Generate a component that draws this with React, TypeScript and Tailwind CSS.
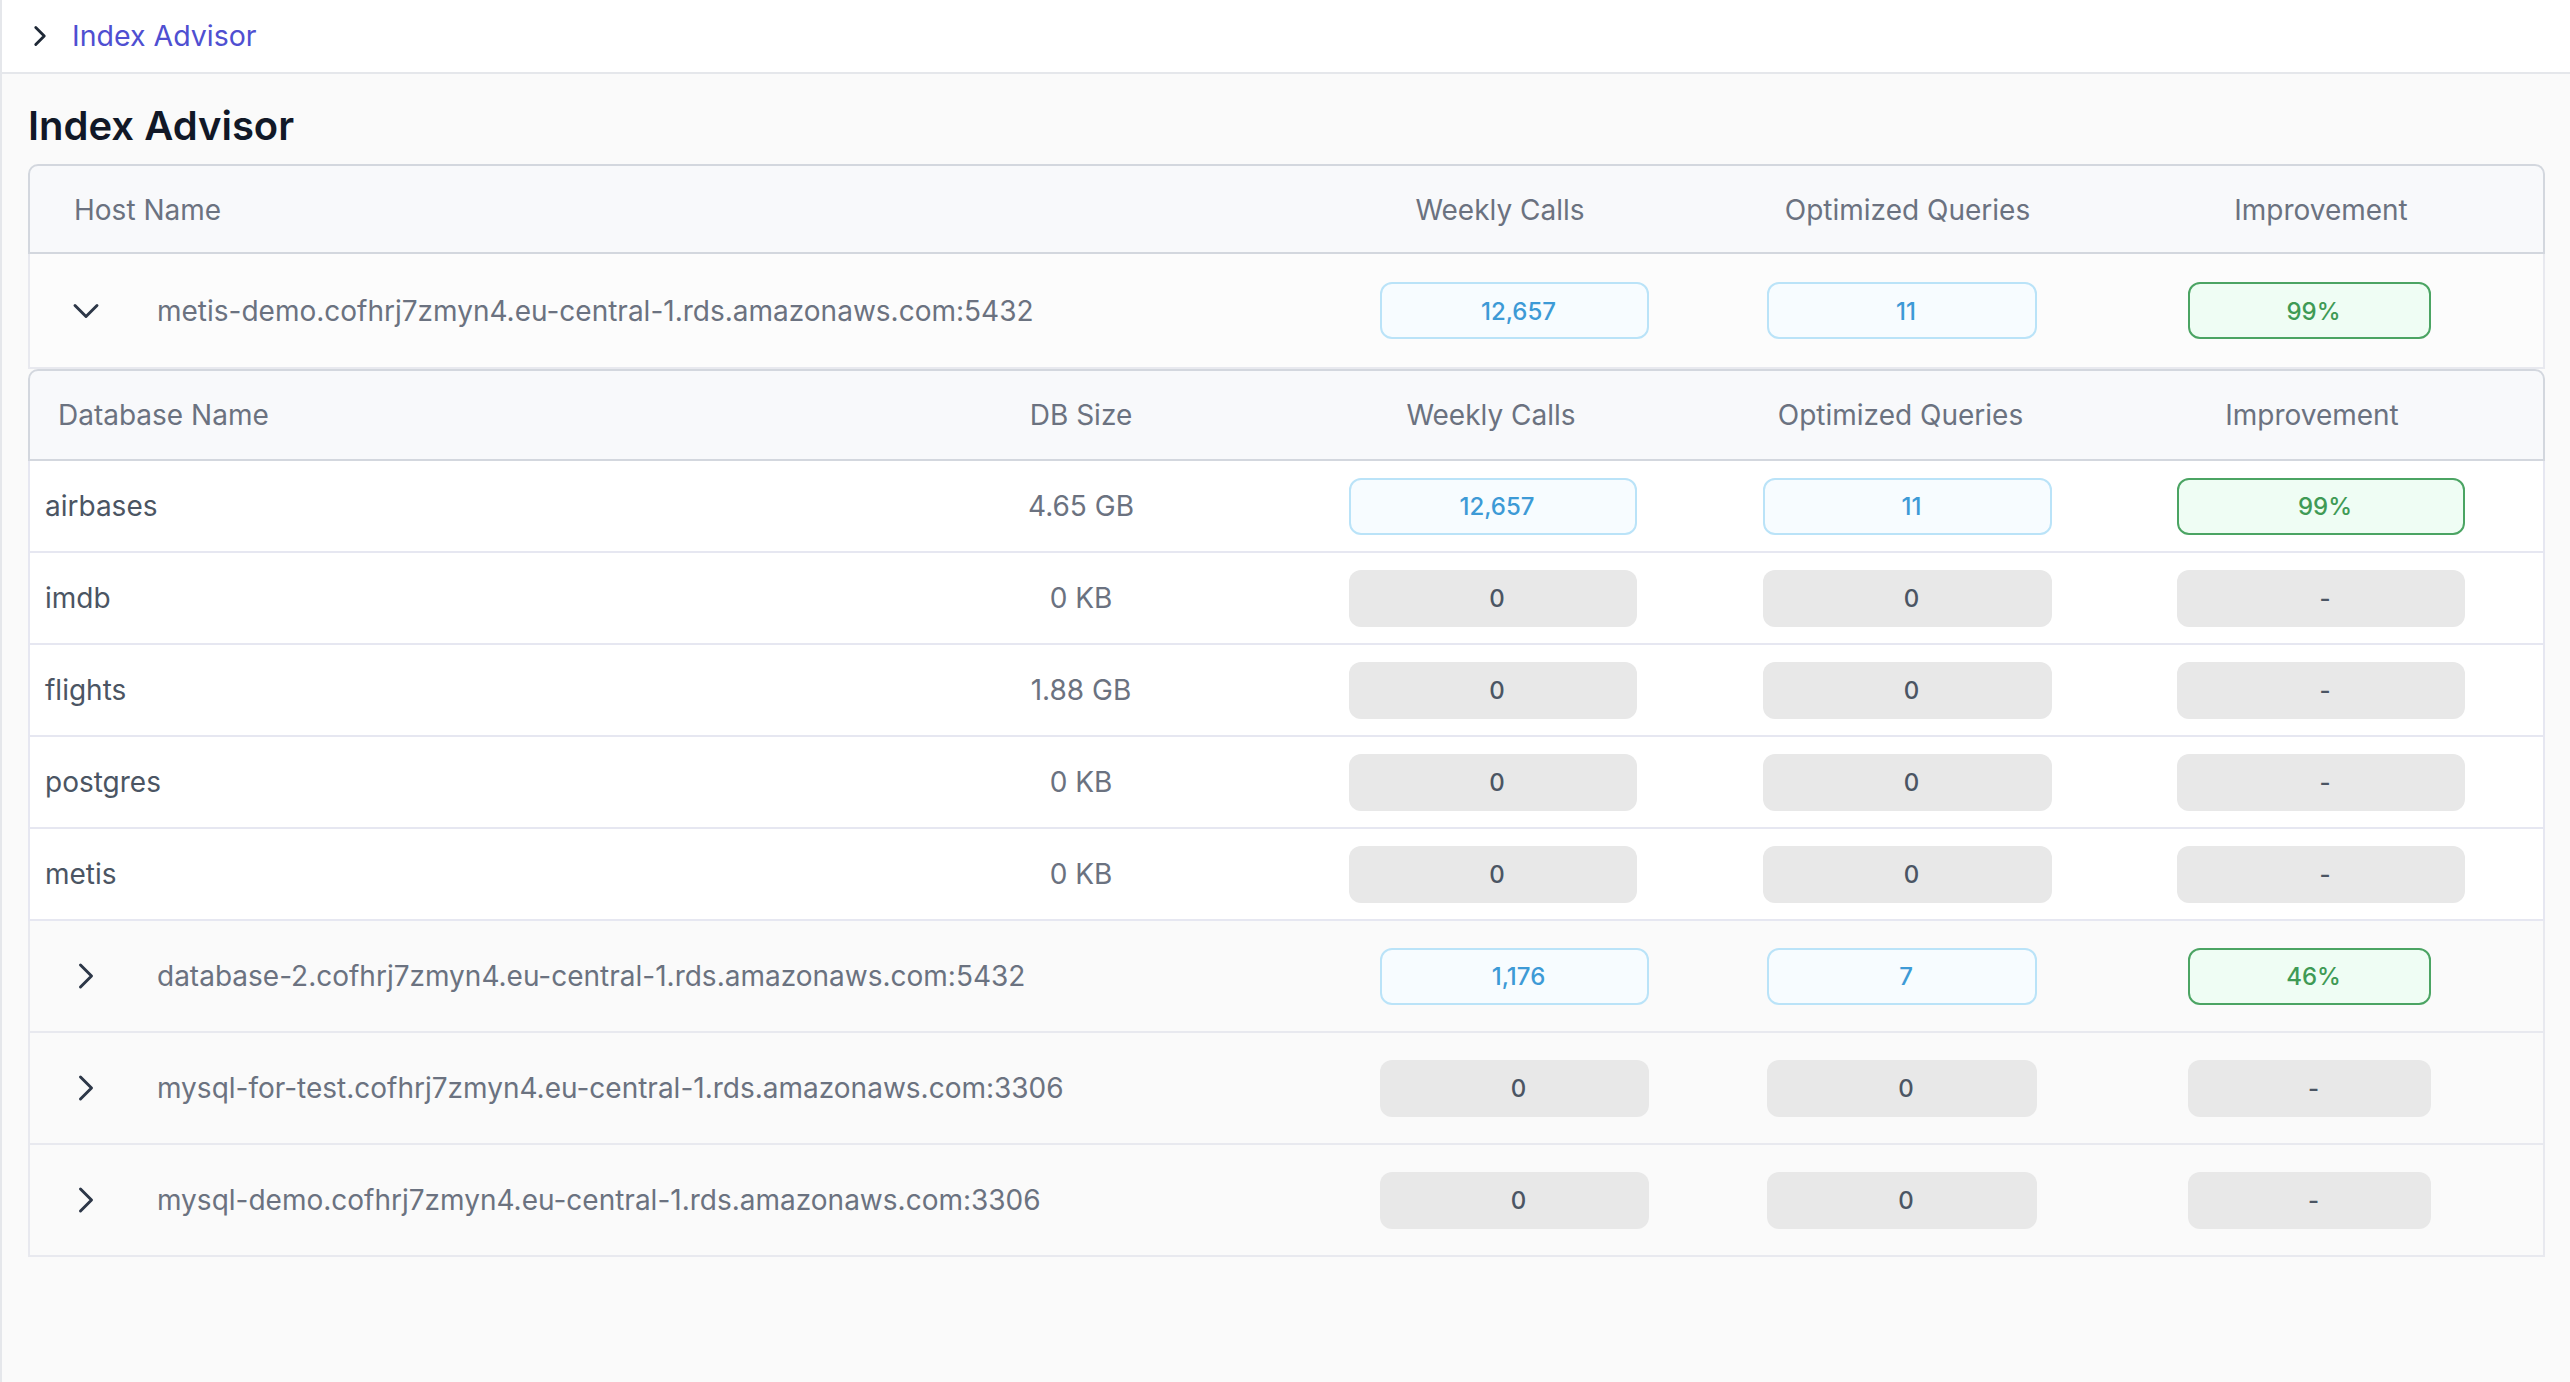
import { ChevronDown, ChevronRight } from "lucide-react";

type Tone = "blue" | "green" | "gray";

const hosts = [
    { name: "metis-demo.cofhrj7zmyn4.eu-central-1.rds.amazonaws.com:5432", calls: "12,657", queries: "11", improvement: "99%", open: true },
    { name: "database-2.cofhrj7zmyn4.eu-central-1.rds.amazonaws.com:5432", calls: "1,176", queries: "7", improvement: "46%", open: false },
    { name: "mysql-for-test.cofhrj7zmyn4.eu-central-1.rds.amazonaws.com:3306", calls: "0", queries: "0", improvement: "-", open: false },
    { name: "mysql-demo.cofhrj7zmyn4.eu-central-1.rds.amazonaws.com:3306", calls: "0", queries: "0", improvement: "-", open: false },
];

const databases = [
    { name: "airbases", size: "4.65 GB", calls: "12,657", queries: "11", improvement: "99%" },
    { name: "imdb", size: "0 KB", calls: "0", queries: "0", improvement: "-" },
    { name: "flights", size: "1.88 GB", calls: "0", queries: "0", improvement: "-" },
    { name: "postgres", size: "0 KB", calls: "0", queries: "0", improvement: "-" },
    { name: "metis", size: "0 KB", calls: "0", queries: "0", improvement: "-" },
];

function Pill({ value, tone, width }: { value: string; tone: Tone; width: string }) {
    const styles: Record<Tone, string> = {
        blue: "border-2 border-[#bae3f8] bg-[#f7fcff] text-[#3d9ad6]",
        green: "border-2 border-[#4ba463] bg-[#effdf4] text-[#3f9a55]",
        gray: "bg-[#e8e8e8] text-[#4b5563]",
    };
    return (
        <div
            className={`${width} ${styles[tone]} flex h-[57px] items-center justify-center rounded-[12px] pl-[8px] pt-[2px] text-[24px] font-medium`}
        >
            {value}
        </div>
    );
}

function toneFor(value: string, kind: "num" | "pct"): Tone {
    if (value === "0" || value === "-") return "gray";
    return kind === "pct" ? "green" : "blue";
}

function HostRow({ host }: { host: (typeof hosts)[number] }) {
    return (
        <div
            className={`grid grid-cols-[1fr_410px_395px_438px] items-center border-x-2 border-b-2 border-[#e8e9ef] ${
                host.open ? "h-[115px] bg-[#fcfcfc]" : "h-[112px] bg-[#fafafa]"
            }`}
        >
            <div className="flex items-center gap-[49px] pl-[34px]">
                {host.open ? (
                    <ChevronDown size={44} strokeWidth={1.6} className="text-[#2d3748]" />
                ) : (
                    <ChevronRight size={44} strokeWidth={1.6} className="text-[#2d3748]" />
                )}
                <span className="text-[28px] text-[#6b7280]">{host.name}</span>
            </div>
            <div className="pl-[80px]">
                <Pill value={host.calls} tone={toneFor(host.calls, "num")} width="w-[269px]" />
            </div>
            <div className="pl-[57px]">
                <Pill value={host.queries} tone={toneFor(host.queries, "num")} width="w-[270px]" />
            </div>
            <div className="pl-[83px]">
                <Pill value={host.improvement} tone={toneFor(host.improvement, "pct")} width="w-[243px]" />
            </div>
        </div>
    );
}

function DatabaseTable() {
    return (
        <div>
            <div className="grid h-[92px] grid-cols-[1fr_402px_418px_405px_438px] items-center rounded-t-[10px] border-2 border-[#d3d7de] bg-[#f8f9fb] text-[28px] text-[#6b7280]">
                <div className="pl-[28px]">Database Name</div>
                <div className="text-center">DB Size</div>
                <div className="text-center">Weekly Calls</div>
                <div className="pr-[4px] text-center">Optimized Queries</div>
                <div className="pr-[24px] text-center">Improvement</div>
            </div>
            {databases.map((db) => (
                <div
                    key={db.name}
                    className="grid h-[92px] grid-cols-[1fr_402px_418px_405px_438px] items-center border-x-2 border-b-2 border-[#e6e7f1] bg-white text-[28px]"
                >
                    <div className="pl-[15px] text-[#4b5563]">{db.name}</div>
                    <div className="text-center text-[#6b7280]">{db.size}</div>
                    <div className="pl-[67px]">
                        <Pill value={db.calls} tone={toneFor(db.calls, "num")} width="w-[288px]" />
                    </div>
                    <div className="pl-[63px]">
                        <Pill value={db.queries} tone={toneFor(db.queries, "num")} width="w-[289px]" />
                    </div>
                    <div className="pl-[72px]">
                        <Pill value={db.improvement} tone={toneFor(db.improvement, "pct")} width="w-[288px]" />
                    </div>
                </div>
            ))}
        </div>
    );
}

export default function App() {
    return (
        <div className="min-h-screen border-l-2 border-[#e5e7eb] bg-[#fafafa] font-['Inter',sans-serif]">
            <header className="flex h-[74px] items-center gap-[15px] border-b-2 border-[#e5e7eb] bg-white pl-[21px]">
                <ChevronRight size={34} strokeWidth={2} className="text-[#1f2937]" />
                <a href="#" className="text-[28.5px] text-[#4f4fd1]">
                    Index Advisor
                </a>
            </header>

            <div className="ml-[26px] mr-[25px]">
                <h1 className="pb-[15px] pt-[29px] text-[40px] font-semibold leading-[46px] text-[#111827]">Index Advisor</h1>

                <div className="flex flex-col">
                    <div className="grid h-[90px] grid-cols-[1fr_410px_395px_438px] items-center rounded-t-[10px] border-2 border-[#d3d7de] bg-[#f8f9fb] pt-[2px] text-[28px] text-[#6b7280]">
                        <div className="pl-[44px]">Host Name</div>
                        <div className="pr-[10px] text-center">Weekly Calls</div>
                        <div className="text-center">Optimized Queries</div>
                        <div className="pr-[6px] text-center">Improvement</div>
                    </div>

                    <HostRow host={hosts[0]} />
                    <DatabaseTable />
                    {hosts.slice(1).map((host) => (
                        <HostRow key={host.name} host={host} />
                    ))}
                </div>
            </div>
        </div>
    );
}
